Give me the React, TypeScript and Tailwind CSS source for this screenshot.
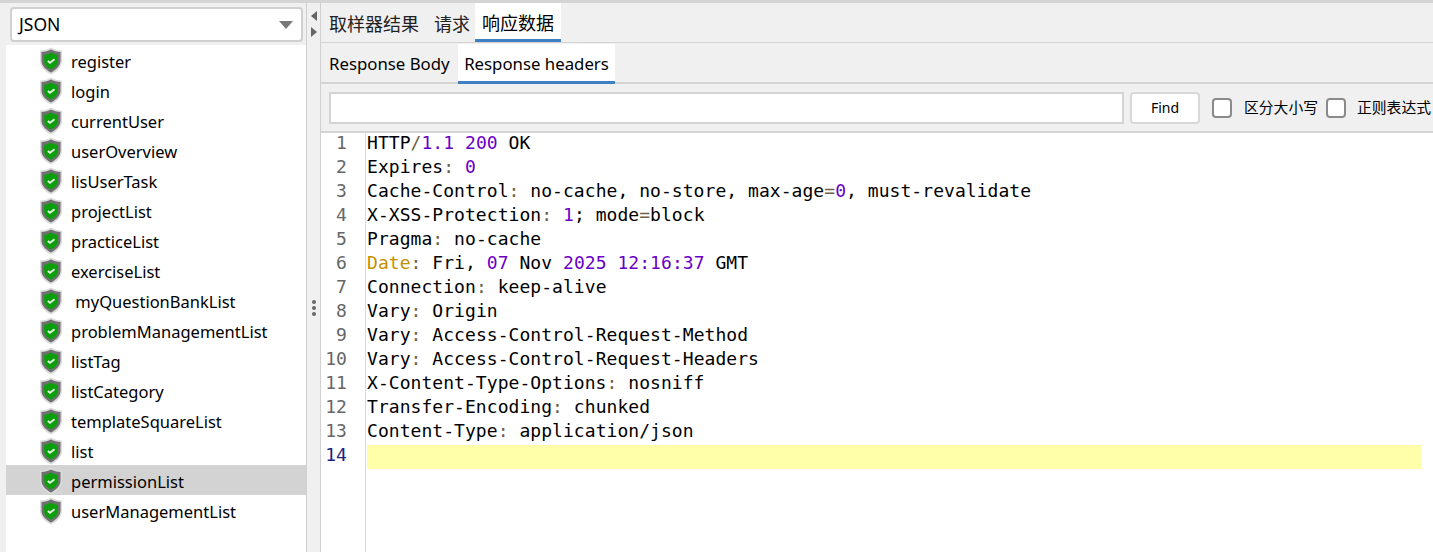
const names = ["register","login","currentUser","userOverview","lisUserTask","projectList","practiceList","exerciseList"," myQuestionBankList","problemManagementList","listTag","listCategory","templateSquareList","list","permissionList","userManagementList"];

function Shield() {
  return (
    <svg width="24" height="28" viewBox="0 0 24 28" className="shrink-0 mt-[2px]">
      <path d="M12 0.500 C15 2.500 19 3.500 23 3.500 V14 C23 20 17 25.500 12 27.500 C7 25.500 1 20 1 14 V3.500 C5 3.500 9 2.500 12 0.500 Z" fill="#dcdcdc" />
      <path d="M12 2.500 C15 4 18 5 21.500 5 V14 C21.500 19 16 23.500 12 25.500 C8 23.500 2.500 19 2.500 14 V5 C6 5 9 4 12 2.500 Z" fill="#707070" />
      <path d="M12 5.500 C14.500 7 17 8 18.800 8 V14 C18.800 18 15.500 21 12 22.500 C8.500 21 5.200 18 5.200 14 V8 C7 8 9.500 7 12 5.500 Z" fill="#0b9f0b" />
      <path d="M8.800 14 L11 15.800 L15.500 12.300" fill="none" stroke="#e6f6e6" strokeWidth="1.800" />
    </svg>
  );
}

const P = ({ children }: { children: React.ReactNode }) => <span className="text-[#6a00c8]">{children}</span>;
const O = ({ children }: { children: React.ReactNode }) => <span className="text-[#6e5f48]">{children}</span>;
const D = ({ children }: { children: React.ReactNode }) => <span className="text-[#c49000]">{children}</span>;

const lines: React.ReactNode[] = [
  <>HTTP<O>/</O><P>1.1</P> <P>200</P> OK</>,
  <>Expires<O>:</O> <P>0</P></>,
  <>Cache-Control<O>:</O> no-cache, no-store, max-age<O>=</O><P>0</P>, must-revalidate</>,
  <>X-XSS-Protection<O>:</O> <P>1</P>; mode<O>=</O>block</>,
  <>Pragma<O>:</O> no-cache</>,
  <><D>Date</D><O>:</O> Fri, <P>07</P> Nov <P>2025</P> <P>12:16:37</P> GMT</>,
  <>Connection<O>:</O> keep-alive</>,
  <>Vary<O>:</O> Origin</>,
  <>Vary<O>:</O> Access-Control-Request-Method</>,
  <>Vary<O>:</O> Access-Control-Request-Headers</>,
  <>X-Content-Type-Options<O>:</O> nosniff</>,
  <>Transfer-Encoding<O>:</O> chunked</>,
  <>Content-Type<O>:</O> application/json</>,
  <>&nbsp;</>,
];

export default function App() {
  return (
    <div className="w-[1433px] h-[552px] overflow-hidden bg-[#f0f0f0] flex flex-col text-black font-['Noto_Sans','Noto_Sans_CJK_SC',sans-serif]">
      <div className="h-[3px] bg-[#d4d4d4] shrink-0" />
      <div className="flex flex-1 min-h-0">
        <div className="w-[306px] pl-[6px] flex flex-col shrink-0">
          <div className="pl-[4px] pr-[3px] pt-[4px] pb-[3px]">
            <div className="h-[35px] bg-white border-2 border-[#d0d0d0] rounded-[4px] flex items-center justify-between pl-[7px] pr-[8px] text-[17.500px]">
              <span>JSON</span>
              <span className="w-0 h-0 border-l-[7px] border-r-[7px] border-t-[8px] border-l-transparent border-r-transparent border-t-[#777]" />
            </div>
          </div>
          <div className="flex-1 bg-white">
            {names.map((n) => (
              <div key={n} className={`h-[30px] flex items-center pl-[33px] gap-[8px] text-[16.500px] ${n === "permissionList" ? "bg-[#d3d3d3]" : ""}`}>
                <Shield />
                <span className="whitespace-pre pt-[4px]">{n}</span>
              </div>
            ))}
          </div>
        </div>
        <div className="w-[14px] shrink-0 border-l border-[#d0d0d0] flex flex-col items-center relative">
          <div className="flex flex-col gap-[6px] pt-[8px] items-center">
            <span className="w-0 h-0 border-y-[5px] border-r-[6px] border-y-transparent border-r-[#666]" />
            <span className="w-0 h-0 border-y-[5px] border-l-[6px] border-y-transparent border-l-[#666]" />
          </div>
          <div className="absolute top-[297px] flex flex-col gap-[2px]">
            <span className="w-[4px] h-[4px] rounded-full bg-[#666]" />
            <span className="w-[4px] h-[4px] rounded-full bg-[#666]" />
            <span className="w-[4px] h-[4px] rounded-full bg-[#666]" />
          </div>
        </div>
        <div className="flex-1 min-w-0 border-l border-[#d0d0d0] flex flex-col">
          <div className="h-[40px] shrink-0 border-b border-[#d4d4d4] flex items-end pl-[8px] text-[18px] font-['Noto_Sans_CJK_SC',sans-serif]">
            <div className="h-[36px] flex items-center pr-[15px] pb-[2px] text-[#222]">取样器结果</div>
            <div className="h-[36px] flex items-center pb-[2px] text-[#222]">请求</div>
            <div className="h-[39px] ml-[5px] pt-[3px] flex items-center justify-center w-[86px] bg-white border-b-[3px] border-[#3f7fc4]">响应数据</div>
          </div>
          <div className="h-[41px] shrink-0 border-b-2 border-[#d4d4d4] flex items-end pl-[8px] text-[16.800px]">
            <div className="h-[38px] flex items-center pt-[2px] w-[128px] whitespace-nowrap">Response Body</div>
            <div className="h-[40px] ml-[1px] w-[157px] pt-[3px] flex items-center justify-center bg-white border-b-[3px] border-[#3f7fc4] -mb-[2px] whitespace-nowrap">Response headers</div>
          </div>
          <div className="h-[49px] shrink-0 border-b-2 border-[#d4d4d4] flex items-center pl-[8px] text-[14px]">
            <div className="w-[795px] h-[32px] bg-white border-2 border-[#d4d4d4]" />
            <div className="ml-[6px] w-[70px] h-[32px] bg-white border-2 border-[#d8d8d8] rounded-[4px] flex items-center justify-center">Find</div>
            <div className="ml-[12px] w-[20px] h-[20px] bg-white border-2 border-[#8a8a8a] rounded-[4px]" />
            <div className="ml-[12px] w-[74px] whitespace-nowrap font-['Noto_Sans_CJK_SC',sans-serif] text-[14.800px]">区分大小写</div>
            <div className="ml-[8px] w-[20px] h-[20px] bg-white border-2 border-[#8a8a8a] rounded-[4px]" />
            <div className="ml-[11px] w-[74px] whitespace-nowrap font-['Noto_Sans_CJK_SC',sans-serif] text-[14.800px]">正则表达式</div>
          </div>
          <div className="flex-1 min-h-0 bg-white flex font-['DejaVu_Sans_Mono',monospace] text-[18px] leading-[20px] tracking-[0.05px]">
            <div className="w-[45px] shrink-0 border-r border-[#d8d8d8]">
              {lines.map((_, i) => (
                <div key={i} className={`h-[24px] pr-[18px] text-right ${i === 13 ? "text-[#1a237e]" : "text-[#666]"}`}>{i + 1}</div>
              ))}
            </div>
            <div className="w-[1055px] pl-px shrink-0">
              {lines.map((l, i) => (
                <div key={i} className={`h-[24px] whitespace-pre ${i === 13 ? "bg-[#ffffaa]" : ""}`}>{l}</div>
              ))}
            </div>
          </div>
        </div>
      </div>
    </div>
  );
}
